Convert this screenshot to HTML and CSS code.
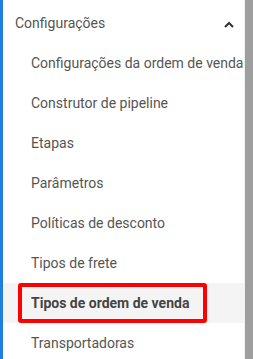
FILE: index.html
```html
<!DOCTYPE html>
<html lang="pt-BR">
<head>
    <meta charset="UTF-8">
    <meta name="viewport" content="width=device-width, initial-scale=1.0">
    <title>Configurações</title>
    <link rel="stylesheet" href="styles.css">
</head>
<body>
    <div class="sidebar">
        <nav class="menu">
            <!-- Grupo: Configurações -->
            <div class="group-header">
                <span>Configurações</span>
                <svg class="chevron" width="10" height="7" viewBox="0 0 10 7">
                    <path d="M1 6 L5 2 L9 6" fill="none" stroke="#333" stroke-width="2"/>
                </svg>
            </div>
            <a class="item" href="#">Configurações da ordem de venda</a>
            <a class="item" href="#">Construtor de pipeline</a>
            <a class="item" href="#">Etapas</a>
            <a class="item" href="#">Parâmetros</a>
            <a class="item" href="#">Políticas de desconto</a>
            <a class="item" href="#">Tipos de frete</a>
            <a class="item active" href="#"><span class="mark">Tipos de ordem de venda</span></a>
            <a class="item" href="#">Transportadoras</a>
        </nav>
        <div class="scrollbar"></div>
    </div>
</body>
</html>
```

FILE: styles.css
```css
body {
    margin: 0;
    font-family: Roboto, Arial, sans-serif;
    background-color: white;
}
.sidebar {
    display: flex;
    height: 359px;
    border-left: 3px solid #1e7ee0;
    overflow: hidden;
}
.menu {
    flex: 1;
    display: flex;
    flex-direction: column;
    border-right: 1px solid #f0f0f0;
}
.group-header {
    display: flex;
    align-items: center;
    justify-content: space-between;
    flex-shrink: 0;
    height: 40px;
    padding: 3px 10px 0 12px;
    font-size: 14px;
    color: #555;
}
.chevron {
    display: block;
    margin-top: 3px;
}
.item {
    display: flex;
    align-items: center;
    flex-shrink: 0;
    height: 40px;
    padding-left: 28px;
    font-size: 14px;
    color: #555;
    text-decoration: none;
    white-space: nowrap;
}
.item.active {
    background-color: #f4f4f4;
    padding-left: 15px;
}
.mark {
    display: flex;
    align-items: center;
    box-sizing: border-box;
    width: 189px;
    height: 40px;
    padding-left: 9px;
    border: 4px solid #ff0000;
    border-radius: 3px;
    font-weight: bold;
    color: #444;
}
.scrollbar {
    width: 8px;
    background-color: #9e9e9e;
}
```
